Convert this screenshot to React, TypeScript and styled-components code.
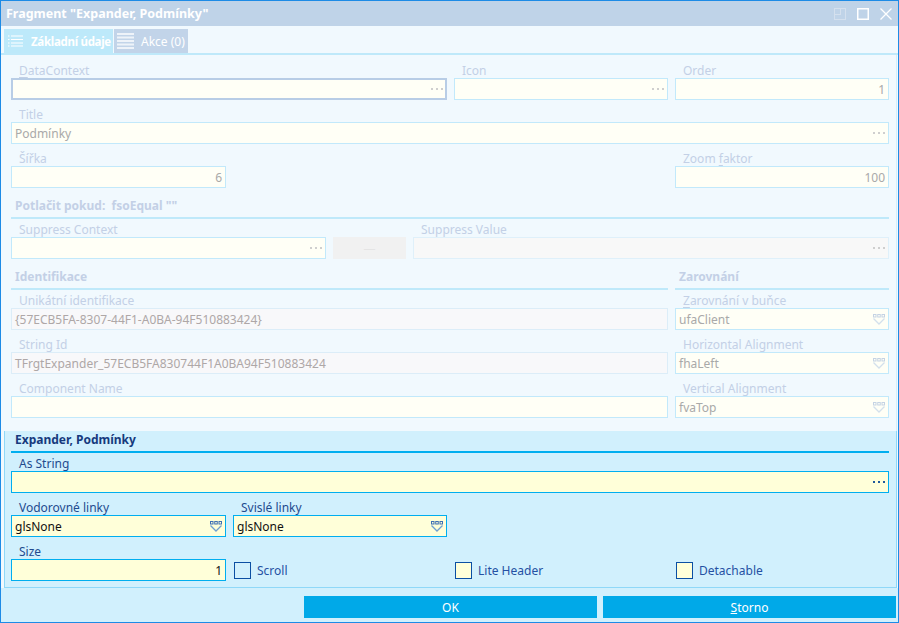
import React from 'react';
import styled, { createGlobalStyle, css } from 'styled-components';

type Tone = 'faded' | 'active';
type Variant = 'faded' | 'focus' | 'locked' | 'grey' | 'active';

const GlobalStyle = createGlobalStyle`
  html, body {
    margin: 0;
    padding: 0;
    background: #ffffff;
  }
  body {
    font-family: "Noto Sans", "Segoe UI", Arial, sans-serif;
    font-size: 12px;
  }
  * {
    box-sizing: border-box;
  }
`;

const COLOR = {
  frame: '#1d8be6',
  title: '#bfd3e8',
  paper: '#f1f9fe',
  cyan: '#d1f0fd',
  tabLine: '#bfe9fa',
  fadedText: '#c3d0e6',
  fadedValue: '#a9a9a9',
  ivory: '#fffff6',
  yellow: '#ffffd9',
  sky: '#00aeef',
  navy: '#163a7d',
  label: '#234b8f',
};

const Window = styled.div`
  width: 899px;
  height: 623px;
  border: 1px solid ${COLOR.frame};
  background: ${COLOR.paper};
  display: flex;
  flex-direction: column;
`;

const TitleBar = styled.div`
  height: 25px;
  flex: none;
  display: flex;
  align-items: center;
  padding: 0 6px 0 5px;
  background: ${COLOR.title};
  color: #ffffff;
  font-weight: 700;
  font-size: 12.5px;
`;

const WinButtons = styled.div`
  margin-left: auto;
  display: flex;
  align-items: center;
  gap: 11px;
`;

const TabStrip = styled.div`
  height: 29px;
  flex: none;
  display: flex;
  gap: 1px;
  padding: 3px 0 0 3px;
  border-bottom: 2px solid ${COLOR.tabLine};
`;

const Tab = styled.div<{ $active?: boolean; $w: number }>`
  width: ${p => p.$w}px;
  height: 24px;
  display: flex;
  align-items: center;
  gap: ${p => (p.$active ? 8 : 7)}px;
  padding-left: ${p => (p.$active ? 4 : 3)}px;
  color: #ffffff;
  white-space: nowrap;
  overflow: hidden;
  background: ${p => (p.$active ? '#bde9fa' : '#c2d4e9')};
  font-weight: ${p => (p.$active ? 700 : 400)};
  font-size: ${p => (p.$active ? '11.5px' : '12px')};
  letter-spacing: ${p => (p.$active ? '-0.3px' : '0')};

  svg {
    flex: none;
  }
`;

const Body = styled.div`
  flex: 1;
  display: flex;
  flex-direction: column;
  margin: 0 1px 0 3px;
`;

const Faded = styled.div`
  flex: 1;
  padding: 7px 7px 0 7px;
  border-right: 1px solid #d3effc;
`;

const Expander = styled.div`
  flex: none;
  padding: 1px 7px 6px 6px;
  background: ${COLOR.cyan};
  border: 1px solid #8fd8f8;
  border-top: 0;
`;

const Grid = styled.div<{ $cols?: string; $top?: number }>`
  display: grid;
  grid-template-columns: ${p => p.$cols ?? '215px 214px 214px 1fr'};
  column-gap: 7px;
  row-gap: 6px;
  margin-top: ${p => p.$top ?? 0}px;
`;

const Split = styled.div`
  display: grid;
  grid-template-columns: 657px 1fr;
  column-gap: 7px;
  margin-top: 10px;
`;

const Stack = styled.div`
  display: flex;
  flex-direction: column;
  gap: 6px;
`;

const SectionTitle = styled.div<{ $tone: Tone; $top?: number }>`
  height: 21px;
  line-height: 16px;
  padding-left: 4px;
  margin-top: ${p => p.$top ?? 0}px;
  margin-bottom: 2px;
  font-weight: 700;
  color: ${p => (p.$tone === 'active' ? COLOR.navy : COLOR.fadedText)};
  border-bottom: 2px solid ${p => (p.$tone === 'active' ? COLOR.sky : COLOR.tabLine)};
`;

const Field = styled.div<{ $span?: number; $col?: number }>`
  display: flex;
  flex-direction: column;
  min-width: 0;
  grid-column: ${p => (p.$col ? `${p.$col} / span ${p.$span ?? 1}` : `span ${p.$span ?? 1}`)};
`;

const Label = styled.div<{ $tone: Tone }>`
  height: 16px;
  line-height: 17px;
  padding-left: 8px;
  white-space: nowrap;
  color: ${p => (p.$tone === 'active' ? COLOR.label : COLOR.fadedText)};

  u {
    text-underline-offset: 2px;
  }
`;

const variants = {
  faded: css`
    border: 1px solid #c2e9fb;
    background: ${COLOR.ivory};
    color: ${COLOR.fadedValue};
  `,
  focus: css`
    border: 2px solid #b8cde6;
    background: ${COLOR.ivory};
    color: ${COLOR.fadedValue};
    padding: 0 2px;
  `,
  locked: css`
    border: 1px solid #dcedf8;
    background: #f8f8fa;
    color: #aea7a7;
  `,
  grey: css`
    border: 1px solid #dff0fa;
    background: #f8f8f8;
    color: ${COLOR.fadedValue};
  `,
  active: css`
    border: 1px solid ${COLOR.sky};
    background: ${COLOR.yellow};
    color: #111111;
  `,
};

const Input = styled.div<{ $v: Variant; $right?: boolean }>`
  height: 22px;
  display: flex;
  align-items: center;
  gap: 6px;
  padding: 0 3px;
  white-space: nowrap;
  overflow: hidden;
  ${p => variants[p.$v]}

  span {
    flex: 1;
    text-align: ${p => (p.$right ? 'right' : 'left')};
  }

  svg {
    flex: none;
  }
`;

const EqButton = styled.div`
  align-self: end;
  height: 22px;
  display: flex;
  align-items: center;
  justify-content: center;
  background: #f1f1f1;
  color: #e4e4e4;
`;

const Check = styled.label<{ $col: number }>`
  grid-column: ${p => p.$col};
  align-self: end;
  height: 22px;
  display: flex;
  align-items: center;
  gap: 6px;
  padding-left: 1px;
  color: #2550a3;
`;

const CheckBox = styled.span<{ $fill: string }>`
  width: 17px;
  height: 17px;
  border: 1px solid #0b4fa3;
  background: ${p => p.$fill};
`;

const Footer = styled.div`
  height: 34px;
  flex: none;
  display: flex;
  justify-content: flex-end;
  gap: 6px;
  padding: 8px 2px 4px 0;
  background: ${COLOR.cyan};
`;

const Action = styled.button`
  width: 293px;
  height: 22px;
  border: 0;
  background: #00a9e8;
  color: #ffffff;
  font: inherit;
  padding: 0;
`;

function Dots({ tone }: { tone: Tone }) {
  const fill = tone === 'active' ? '#1f5a9c' : '#cfcfcf';
  return (
    <svg width="12" height="4" viewBox="0 0 12 4">
      <rect x="0" y="1" width="2" height="2" fill={fill} />
      <rect x="5" y="1" width="2" height="2" fill={fill} />
      <rect x="10" y="1" width="2" height="2" fill={fill} />
    </svg>
  );
}

function DropIcon({ tone }: { tone: Tone }) {
  const box = tone === 'active' ? '#3f70b4' : '#c5d3e4';
  const line = tone === 'active' ? '#6f9fd0' : '#d3e0ec';
  return (
    <svg width="12" height="11" viewBox="0 0 12 11">
      <rect x="0.5" y="0.5" width="2.5" height="2.5" fill="none" stroke={box} strokeWidth="1" />
      <rect x="4.75" y="0.5" width="2.5" height="2.5" fill="none" stroke={box} strokeWidth="1" />
      <rect x="9" y="0.5" width="2.5" height="2.5" fill="none" stroke={box} strokeWidth="1" />
      <polyline points="0.5,4.5 6,10 11.5,4.5" fill="none" stroke={line} strokeWidth="1.3" />
    </svg>
  );
}

function ListIcon() {
  return (
    <svg width="15" height="12" viewBox="0 0 15 12">
      {[1, 4.5, 8, 11].map(y => (
        <g key={y}>
          <rect x="0" y={y - 0.5} width="1.5" height="1" fill="#ffffff" />
          <rect x="3" y={y - 0.5} width="12" height="1" fill="#ffffff" />
        </g>
      ))}
    </svg>
  );
}

function LinesIcon() {
  return (
    <svg width="17" height="16" viewBox="0 0 17 16">
      {[1, 4.5, 8, 11.5, 15].map(y => (
        <rect key={y} x="0" y={y - 1} width="17" height="2" fill="#eef3f9" />
      ))}
    </svg>
  );
}

function TextField(props: {
  label: React.ReactNode;
  value?: string;
  v?: Variant;
  tone?: Tone;
  right?: boolean;
  dots?: boolean;
  drop?: boolean;
  span?: number;
  col?: number;
}) {
  const tone = props.tone ?? 'faded';
  return (
    <Field $span={props.span} $col={props.col}>
      <Label $tone={tone}>{props.label}</Label>
      <Input $v={props.v ?? 'faded'} $right={props.right}>
        <span>{props.value}</span>
        {props.dots && <Dots tone={tone} />}
        {props.drop && <DropIcon tone={tone} />}
      </Input>
    </Field>
  );
}

export default function App() {
  return (
    <>
      <GlobalStyle />
      <Window>
        <TitleBar>
          Fragment &quot;Expander, Podmínky&quot;
          <WinButtons>
            <svg width="12" height="12" viewBox="0 0 12 12">
              <rect x="0.5" y="0.5" width="11" height="11" fill="none" stroke="#d4e0ee" />
              <rect x="0.5" y="0.5" width="6" height="6" fill="none" stroke="#d4e0ee" />
            </svg>
            <svg width="12" height="12" viewBox="0 0 12 12">
              <rect x="0.75" y="0.75" width="10.5" height="10.5" fill="none" stroke="#ffffff" strokeWidth="1.5" />
            </svg>
            <svg width="12" height="12" viewBox="0 0 12 12">
              <path d="M0.5 0.5 L11.5 11.5 M11.5 0.5 L0.5 11.5" stroke="#ffffff" strokeWidth="1.3" />
            </svg>
          </WinButtons>
        </TitleBar>

        <TabStrip>
          <Tab $active $w={109}>
            <ListIcon />
            Základní údaje
          </Tab>
          <Tab $w={74}>
            <LinesIcon />
            Akce (0)
          </Tab>
        </TabStrip>

        <Body>
          <Faded>
            <Grid>
              <TextField label={<><u>D</u>ataContext</>} v="focus" dots span={2} />
              <TextField label="Icon" dots />
              <TextField label="Order" value="1" right />
              <TextField label="Title" value="Podmínky" dots span={4} />
              <TextField label="Šířka" value="6" right />
              <TextField label={<>Zoom <u>f</u>aktor</>} value="100" right col={4} />
            </Grid>

            <SectionTitle $tone="faded" $top={10}>
              Potlačit pokud:&nbsp; fsoEqual &quot;&quot;
            </SectionTitle>
            <Grid $cols="315px 73px 1fr">
              <TextField label="Suppress Context" dots />
              <EqButton>—</EqButton>
              <TextField label="Suppress Value" v="grey" dots />
            </Grid>

            <Split>
              <div>
                <SectionTitle $tone="faded">Identifikace</SectionTitle>
                <Stack>
                  <TextField label="Unikátní identifikace" value="{57ECB5FA-8307-44F1-A0BA-94F510883424}" v="locked" />
                  <TextField label="String Id" value="TFrgtExpander_57ECB5FA830744F1A0BA94F510883424" v="locked" />
                  <TextField label="Component Name" />
                </Stack>
              </div>
              <div>
                <SectionTitle $tone="faded">Zarovnání</SectionTitle>
                <Stack>
                  <TextField label={<><u>Z</u>arovnání v buňce</>} value="ufaClient" drop />
                  <TextField label="Horizontal Alignment" value="fhaLeft" drop />
                  <TextField label="Vertical Alignment" value="fvaTop" drop />
                </Stack>
              </div>
            </Split>
          </Faded>

          <Expander>
            <SectionTitle $tone="active">Expander, Podmínky</SectionTitle>
            <Grid>
              <TextField label="As String" tone="active" v="active" dots span={4} />
              <TextField label="Vodorovné linky" value="glsNone" tone="active" v="active" drop />
              <TextField label="Svislé linky" value="glsNone" tone="active" v="active" drop col={2} />
              <TextField label="Size" value="1" tone="active" v="active" right col={1} />
              <Check $col={2}>
                <CheckBox $fill={COLOR.cyan} />
                Scroll
              </Check>
              <Check $col={3}>
                <CheckBox $fill={COLOR.yellow} />
                Lite Header
              </Check>
              <Check $col={4}>
                <CheckBox $fill={COLOR.yellow} />
                Detachable
              </Check>
            </Grid>
          </Expander>
        </Body>

        <Footer>
          <Action type="button">OK</Action>
          <Action type="button">
            <u>S</u>torno
          </Action>
        </Footer>
      </Window>
    </>
  );
}
